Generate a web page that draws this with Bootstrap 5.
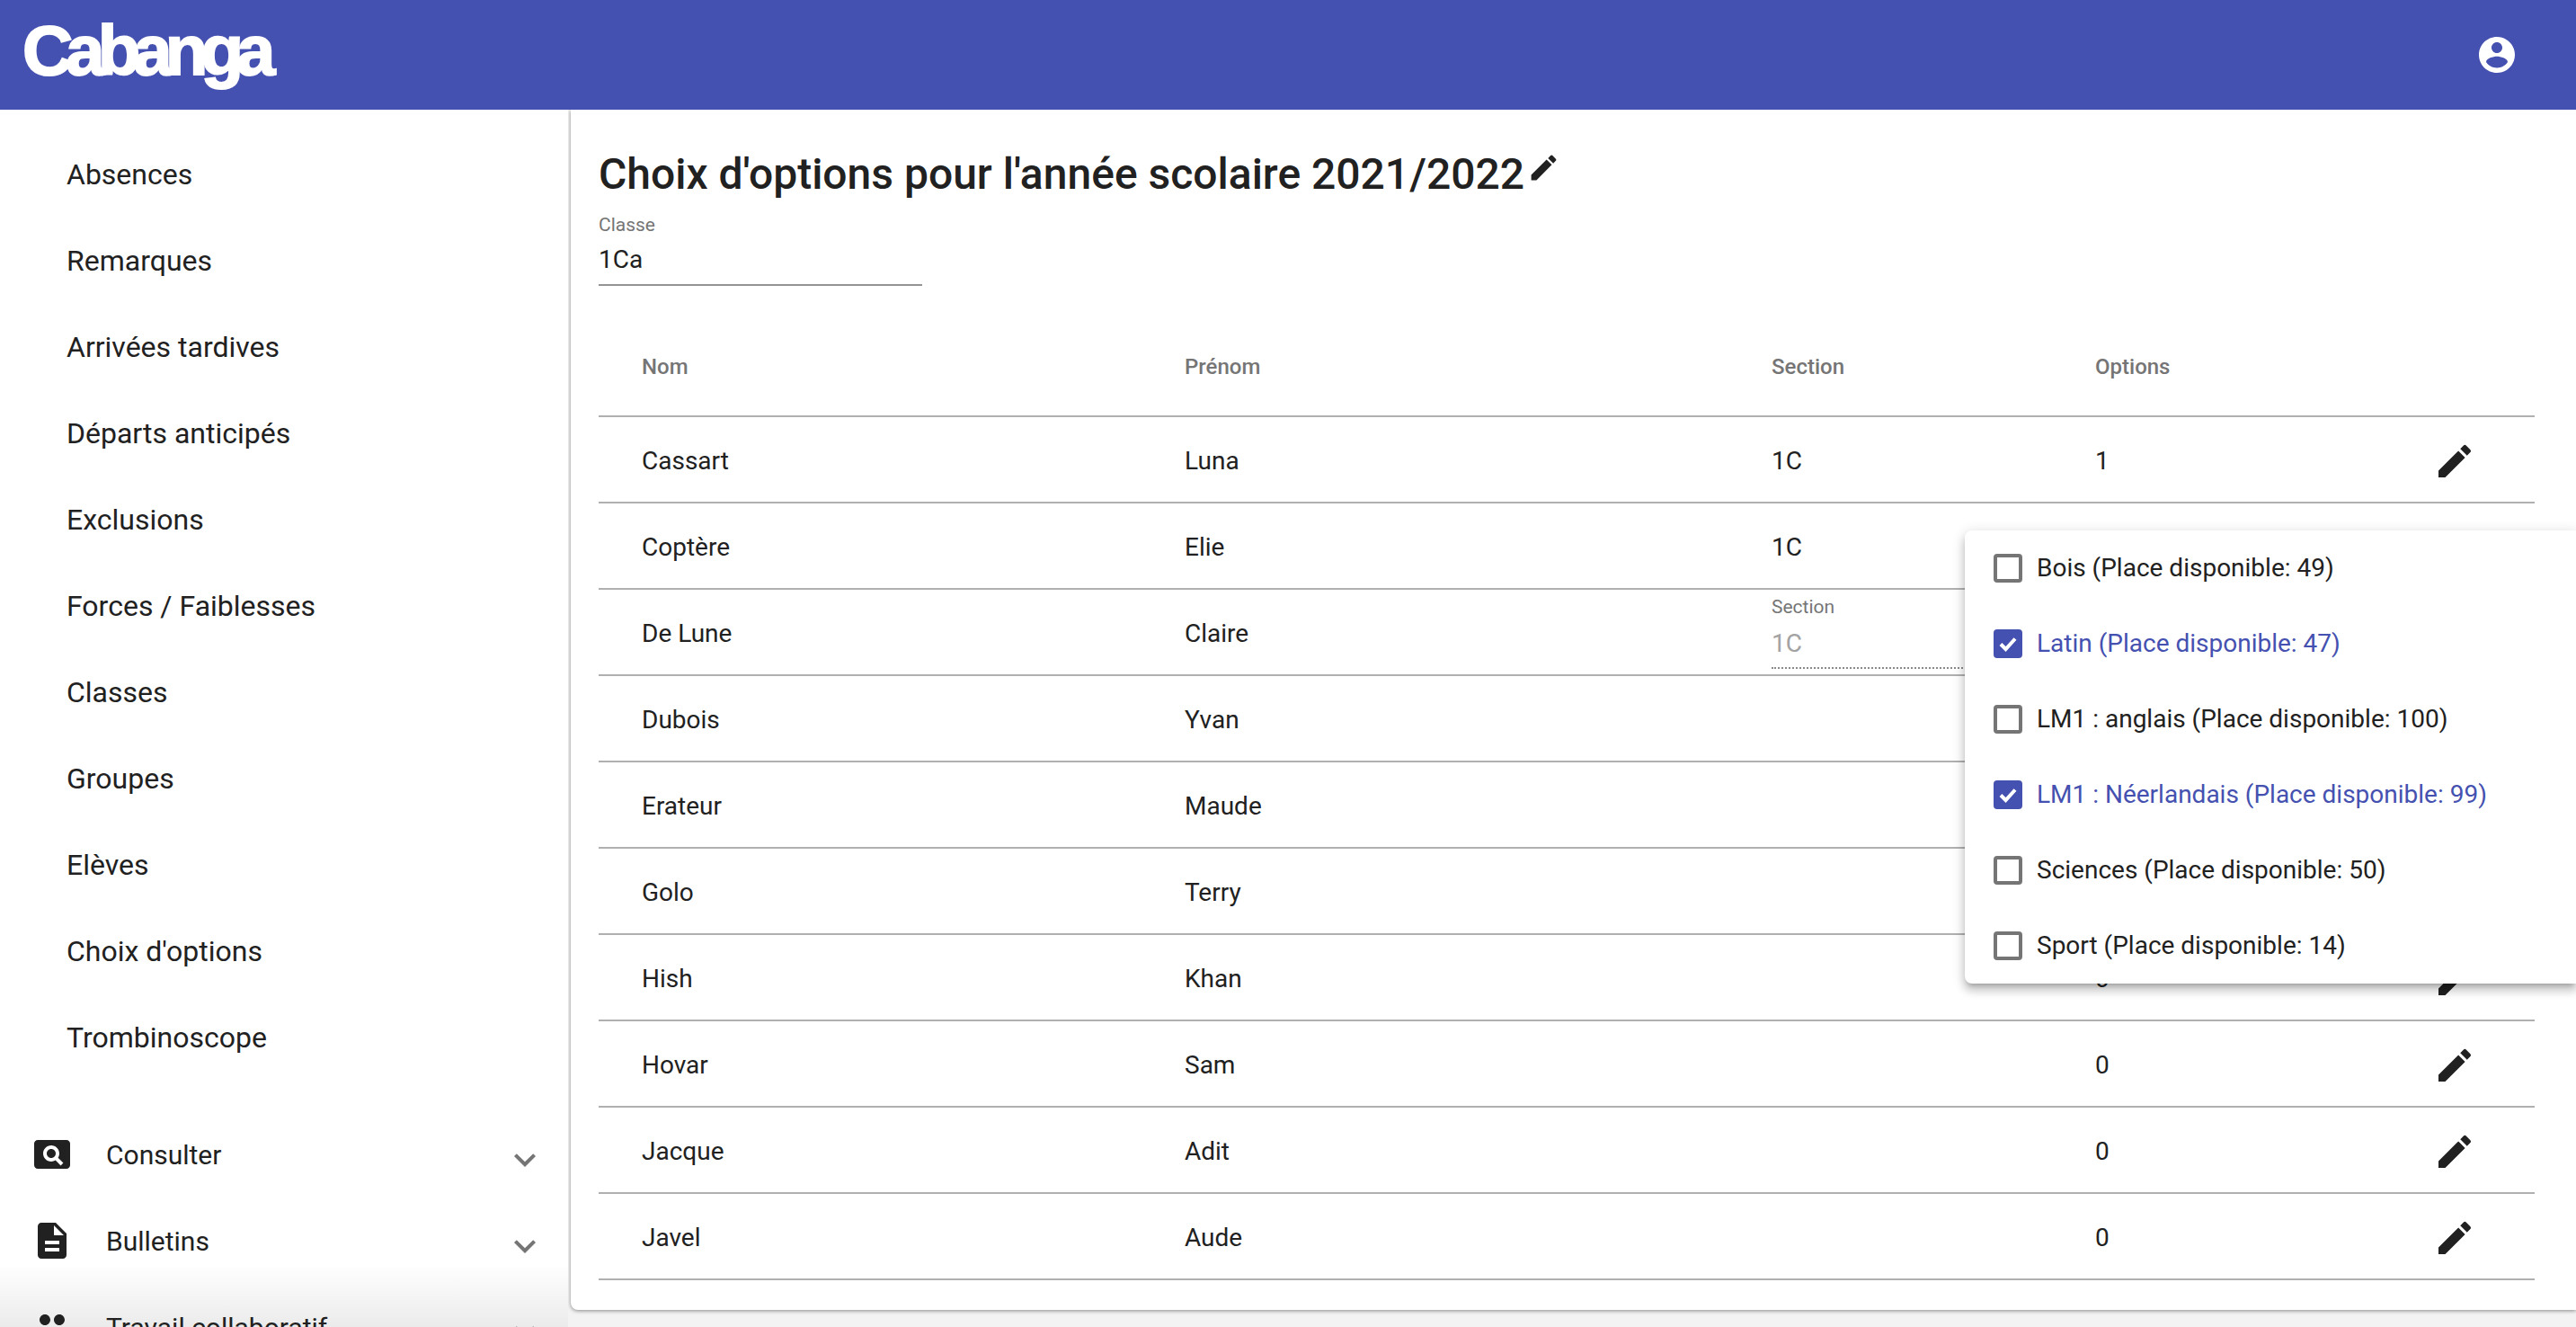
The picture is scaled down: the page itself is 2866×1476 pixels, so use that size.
<!doctype html>
<html lang="fr">
<head>
<meta charset="utf-8">
<title>Cabanga</title>
<link rel="stylesheet" href="https://cdn.jsdelivr.net/npm/bootstrap@5.3.0/dist/css/bootstrap.min.css">
<style>
html,body{height:1476px;overflow:hidden}
body{font-family:Roboto,"Liberation Sans",sans-serif;color:#212121;background:#f3f3f3;font-size:28px}
.cb-top{height:122px;background:#4551b0;padding:0 64px 0 25px}
.cb-logo{font-family:"Liberation Sans",sans-serif;font-weight:700;font-size:78px;letter-spacing:-8px;line-height:1;color:#fff;-webkit-text-stroke:2px #fff;margin-top:-10px}
.cb-shell{height:1354px}
.cb-side{width:632px;height:1354px;background:#fff;overflow:hidden;padding-top:24px;position:relative;flex:none}
.cb-side nav{position:relative;z-index:1}
.cb-link{height:96px;padding-left:74px;font-size:32px;color:#212121;text-decoration:none}
.cb-group{height:96px;padding-left:34px;font-size:30px;color:#212121;text-decoration:none}
.cb-group .cb-ico{margin-right:36px;fill:#212121;flex:none}
.cb-group .cb-chev{position:relative;top:6px;margin-left:auto;margin-right:24px;fill:#757575}
.cb-first{margin-top:34px}
.cb-fade{position:absolute;left:0;right:0;bottom:0;height:70px;background:linear-gradient(to bottom,rgba(235,235,235,0),rgba(235,235,235,1))}
.cb-main{flex:1 1 auto;margin-left:3px;height:1335px;background:#fff;box-shadow:0 1px 4px rgba(0,0,0,.45);border-bottom-left-radius:8px;padding:44px 46px 32px 31px}
.cb-title{font-size:48px;font-weight:500;line-height:56px;margin:0;color:#212121}
.cb-title svg{fill:#212121;margin-top:-16px;margin-left:3px}
.cb-field{width:360px;margin-top:16px;border-bottom:2px solid #949494;height:80px}
.cb-lab{font-size:21px;line-height:24px;color:#757575}
.cb-val{font-size:28px;line-height:54px}
.cb-wrap{margin-top:33px}
.cb-table{table-layout:fixed;width:2154px;margin:0;--bs-table-bg:transparent}
.cb-table>thead>tr>th{height:112px;padding:2px 48px 0;font-size:24px;font-weight:500;color:#757575;border-bottom:2px solid #b0b0b0;vertical-align:middle}
.cb-table>tbody>tr>td{height:96px;padding:4px 48px 0;font-size:28px;color:#212121;border-bottom:2px solid #b0b0b0;vertical-align:middle}
.cb-table>tbody>tr>td.cb-edit{padding:4px 0 0 64px}
.cb-table>tbody>tr>td.cb-sec{vertical-align:top;padding-top:7px}
.cb-sec .cb-lab{color:#757575}
.cb-dis{font-size:28px;line-height:46px;color:#a3a3a3;border-bottom:2px dotted #8a8a8a;height:51px;margin-top:6px}
.cb-edit svg{fill:#212121;display:block}
.cb-menu{position:absolute;left:2186px;right:0;top:590px;height:504px;background:#fff;border-radius:8px 0 0 8px;box-shadow:0 5px 5px -3px rgba(0,0,0,.2),0 8px 10px 1px rgba(0,0,0,.14),0 3px 14px 2px rgba(0,0,0,.12);margin:0;padding:0;list-style:none}
.cb-item{height:84px;padding-left:32px;font-size:28px;color:#212121}
.cb-box{width:32px;height:32px;border:4px solid #757575;border-radius:4px;margin-right:16px;flex:none;background:#fff}
.cb-on{color:#4551b0}
.cb-on .cb-box{background:#4551b0;border-color:#4551b0}
.cb-box svg{display:block;margin:-4px;fill:none;stroke:#fff;stroke-width:4}
</style>
</head>
<body>
<nav class="navbar cb-top d-flex justify-content-between align-items-center">
  <span class="cb-logo">Cabanga</span>
  <svg width="48" height="48" viewBox="0 0 24 24" fill="#fff"><path d="M12 2C6.48 2 2 6.48 2 12s4.48 10 10 10 10-4.48 10-10S17.52 2 12 2zm0 3c1.66 0 3 1.34 3 3s-1.34 3-3 3-3-1.34-3-3 1.34-3 3-3zm0 14.2c-2.5 0-4.71-1.28-6-3.22.03-1.99 4-3.08 6-3.08 1.99 0 5.97 1.09 6 3.08-1.29 1.94-3.5 3.22-6 3.22z"/></svg>
</nav>
<div class="cb-shell d-flex">
  <aside class="cb-side">
    <nav class="nav flex-column flex-nowrap">
      <a class="cb-link d-flex align-items-center" href="#">Absences</a>
      <a class="cb-link d-flex align-items-center" href="#">Remarques</a>
      <a class="cb-link d-flex align-items-center" href="#">Arrivées tardives</a>
      <a class="cb-link d-flex align-items-center" href="#">Départs anticipés</a>
      <a class="cb-link d-flex align-items-center" href="#">Exclusions</a>
      <a class="cb-link d-flex align-items-center" href="#">Forces / Faiblesses</a>
      <a class="cb-link d-flex align-items-center" href="#">Classes</a>
      <a class="cb-link d-flex align-items-center" href="#">Groupes</a>
      <a class="cb-link d-flex align-items-center" href="#">Elèves</a>
      <a class="cb-link d-flex align-items-center" href="#">Choix d'options</a>
      <a class="cb-link d-flex align-items-center" href="#">Trombinoscope</a>
      <a class="cb-group cb-first d-flex align-items-center" href="#">
        <svg class="cb-ico" width="48" height="48" viewBox="0 0 24 24"><path d="M11.5 9C10.12 9 9 10.12 9 11.5s1.12 2.5 2.5 2.5 2.5-1.12 2.5-2.5S12.88 9 11.5 9zM20 4H4c-1.1 0-2 .9-2 2v12c0 1.1.9 2 2 2h16c1.1 0 2-.9 2-2V6c0-1.1-.9-2-2-2zm-3.21 14.21l-2.91-2.91c-.69.44-1.51.7-2.38.7C9 16 7 14 7 11.5S9 7 11.5 7 16 9 16 11.5c0 .88-.26 1.69-.7 2.39l2.91 2.9-1.42 1.42z"/></svg>
        Consulter
        <svg class="cb-chev" width="48" height="48" viewBox="0 0 24 24"><path d="M16.59 8.59L12 13.17 7.41 8.59 6 10l6 6 6-6z"/></svg>
      </a>
      <a class="cb-group d-flex align-items-center" href="#">
        <svg class="cb-ico" width="48" height="48" viewBox="0 0 24 24"><path d="M14 2H6c-1.1 0-1.99.9-1.99 2L4 20c0 1.1.89 2 1.99 2H18c1.1 0 2-.9 2-2V8l-6-6zm2 16H8v-2h8v2zm0-4H8v-2h8v2zm-3-5V3.5L18.5 9H13z"/></svg>
        Bulletins
        <svg class="cb-chev" width="48" height="48" viewBox="0 0 24 24"><path d="M16.59 8.59L12 13.17 7.41 8.59 6 10l6 6 6-6z"/></svg>
      </a>
      <a class="cb-group d-flex align-items-center" href="#">
        <svg class="cb-ico" width="48" height="48" viewBox="0 0 24 24"><path d="M16 11c1.66 0 2.99-1.34 2.99-3S17.66 5 16 5c-1.66 0-3 1.34-3 3s1.34 3 3 3zm-8 0c1.66 0 2.99-1.34 2.99-3S9.66 5 8 5C6.34 5 5 6.34 5 8s1.34 3 3 3zm0 2c-2.33 0-7 1.17-7 3.5V19h14v-2.5c0-2.33-4.67-3.5-7-3.5zm8 0c-.29 0-.62.02-.97.05 1.16.84 1.97 1.97 1.97 3.45V19h6v-2.5c0-2.33-4.67-3.5-7-3.5z"/></svg>
        Travail collaboratif
        <svg class="cb-chev" width="48" height="48" viewBox="0 0 24 24"><path d="M16.59 8.59L12 13.17 7.41 8.59 6 10l6 6 6-6z"/></svg>
      </a>
    </nav>
    <div class="cb-fade"></div>
  </aside>
  <main class="cb-main">
    <h1 class="cb-title d-flex align-items-center">Choix d'options pour l'année scolaire 2021/2022<svg width="37" height="37" viewBox="0 0 24 24"><path d="M3 17.25V21h3.75L17.81 9.94l-3.75-3.75L3 17.25zM20.71 7.04c.39-.39.39-1.02 0-1.41l-2.34-2.34a.9959.9959 0 0 0-1.41 0l-1.83 1.83 3.75 3.75 1.83-1.83z"/></svg></h1>
    <div class="cb-field">
      <div class="cb-lab">Classe</div>
      <div class="cb-val">1Ca</div>
    </div>
    <div class="cb-wrap">
      <table class="table cb-table">
        <colgroup><col style="width:604px"><col style="width:653px"><col style="width:360px"><col style="width:360px"><col style="width:177px"></colgroup>
        <thead><tr><th>Nom</th><th>Prénom</th><th>Section</th><th>Options</th><th></th></tr></thead>
        <tbody>
          <tr><td>Cassart</td><td>Luna</td><td>1C</td><td>1</td><td class="cb-edit"><svg width="48" height="48" viewBox="0 0 24 24"><path d="M3 17.25V21h3.75L17.81 9.94l-3.75-3.75L3 17.25zM20.71 7.04c.39-.39.39-1.02 0-1.41l-2.34-2.34a.9959.9959 0 0 0-1.41 0l-1.83 1.83 3.75 3.75 1.83-1.83z"/></svg></td></tr>
          <tr><td>Coptère</td><td>Elie</td><td>1C</td><td></td><td></td></tr>
          <tr><td>De Lune</td><td>Claire</td><td class="cb-sec"><div class="cb-lab">Section</div><div class="cb-dis">1C</div></td><td></td><td></td></tr>
          <tr><td>Dubois</td><td>Yvan</td><td></td><td></td><td></td></tr>
          <tr><td>Erateur</td><td>Maude</td><td></td><td></td><td></td></tr>
          <tr><td>Golo</td><td>Terry</td><td></td><td></td><td></td></tr>
          <tr><td>Hish</td><td>Khan</td><td></td><td>0</td><td class="cb-edit"><svg width="48" height="48" viewBox="0 0 24 24"><path d="M3 17.25V21h3.75L17.81 9.94l-3.75-3.75L3 17.25zM20.71 7.04c.39-.39.39-1.02 0-1.41l-2.34-2.34a.9959.9959 0 0 0-1.41 0l-1.83 1.83 3.75 3.75 1.83-1.83z"/></svg></td></tr>
          <tr><td>Hovar</td><td>Sam</td><td></td><td>0</td><td class="cb-edit"><svg width="48" height="48" viewBox="0 0 24 24"><path d="M3 17.25V21h3.75L17.81 9.94l-3.75-3.75L3 17.25zM20.71 7.04c.39-.39.39-1.02 0-1.41l-2.34-2.34a.9959.9959 0 0 0-1.41 0l-1.83 1.83 3.75 3.75 1.83-1.83z"/></svg></td></tr>
          <tr><td>Jacque</td><td>Adit</td><td></td><td>0</td><td class="cb-edit"><svg width="48" height="48" viewBox="0 0 24 24"><path d="M3 17.25V21h3.75L17.81 9.94l-3.75-3.75L3 17.25zM20.71 7.04c.39-.39.39-1.02 0-1.41l-2.34-2.34a.9959.9959 0 0 0-1.41 0l-1.83 1.83 3.75 3.75 1.83-1.83z"/></svg></td></tr>
          <tr><td>Javel</td><td>Aude</td><td></td><td>0</td><td class="cb-edit"><svg width="48" height="48" viewBox="0 0 24 24"><path d="M3 17.25V21h3.75L17.81 9.94l-3.75-3.75L3 17.25zM20.71 7.04c.39-.39.39-1.02 0-1.41l-2.34-2.34a.9959.9959 0 0 0-1.41 0l-1.83 1.83 3.75 3.75 1.83-1.83z"/></svg></td></tr>
        </tbody>
      </table>
    </div>
  </main>
</div>
<ul class="cb-menu">
  <li class="cb-item d-flex align-items-center"><span class="cb-box"></span>Bois (Place disponible: 49)</li>
  <li class="cb-item cb-on d-flex align-items-center"><span class="cb-box"><svg width="32" height="32" viewBox="0 0 32 32"><path d="M8 16.5l5.5 5.5L24 10.5"/></svg></span>Latin (Place disponible: 47)</li>
  <li class="cb-item d-flex align-items-center"><span class="cb-box"></span>LM1 : anglais (Place disponible: 100)</li>
  <li class="cb-item cb-on d-flex align-items-center"><span class="cb-box"><svg width="32" height="32" viewBox="0 0 32 32"><path d="M8 16.5l5.5 5.5L24 10.5"/></svg></span>LM1 : Néerlandais (Place disponible: 99)</li>
  <li class="cb-item d-flex align-items-center"><span class="cb-box"></span>Sciences (Place disponible: 50)</li>
  <li class="cb-item d-flex align-items-center"><span class="cb-box"></span>Sport (Place disponible: 14)</li>
</ul>
<script src="https://cdn.jsdelivr.net/npm/bootstrap@5.3.0/dist/js/bootstrap.bundle.min.js"></script>
</body>
</html>
